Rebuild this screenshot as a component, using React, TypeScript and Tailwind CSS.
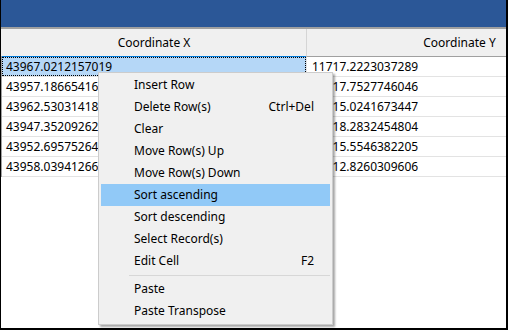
import React from 'react';

const rows = [
  ['43967.0212157019', '11717.2223037289'],
  ['43957.1866541629', '11717.7527746046'],
  ['43962.5303141843', '11715.0241673447'],
  ['43947.3520926291', '11718.2832454804'],
  ['43952.6957526471', '11715.5546382205'],
  ['43958.0394126650', '11712.8260309606'],
];

type MenuItem = { label: string; shortcut?: string; active?: boolean } | 'sep';

const menu: MenuItem[] = [
  { label: 'Insert Row' },
  { label: 'Delete Row(s)', shortcut: 'Ctrl+Del' },
  { label: 'Clear' },
  { label: 'Move Row(s) Up' },
  { label: 'Move Row(s) Down' },
  { label: 'Sort ascending', active: true },
  { label: 'Sort descending' },
  { label: 'Select Record(s)' },
  { label: 'Edit Cell', shortcut: 'F2' },
  'sep',
  { label: 'Paste' },
  { label: 'Paste Transpose' },
];

export default function App() {
  return (
    <div className="relative w-[508px] h-[330px] overflow-hidden bg-white border-l border-r-2 border-b-2 border-black font-['Segoe_UI','Noto_Sans',sans-serif] text-[12px] text-black">
      <div className="h-[27px] bg-[#2b5797]" />
      <div className="h-[2px] bg-[#a0a0a0]" />

      {/* header */}
      <div className="flex h-[28px] bg-[#f0f0f0]">
        <div className="w-[1px] shrink-0 border-b border-[#a0a0a0]" />
        <div className="w-[304px] shrink-0 flex items-center justify-center border-b border-[#0078d7]">Coordinate X</div>
        <div className="w-[306px] shrink-0 flex items-center justify-center border-l border-b border-[#d5d5d5] border-b-[#a0a0a0]">Coordinate Y</div>
      </div>

      {/* rows */}
      <div className="flex flex-col">
        {rows.map((r, i) => (
          <div key={i} className="flex h-[20px]">
            <div className="w-[1px] shrink-0 bg-[#a0a0a0]" />
            <div
              className={`relative w-[304px] shrink-0 flex items-center pl-[4px] border-b border-[#e3e3e3] ${i === 0 ? 'bg-[#b5d7f7]' : ''}`}
            >
              {i === 0 && <div className="absolute inset-0 border border-dotted border-black" />}
              {r[0]}
            </div>
            <div className="w-[306px] shrink-0 flex items-center pl-[5px] border-l border-b border-[#e3e3e3]">{r[1]}</div>
          </div>
        ))}
      </div>

      {/* context menu */}
      <div className="absolute left-[97px] top-[72px] w-[235px] bg-[#f0f0f0] border border-[#cccccc] pt-[1px] pb-[2px] px-[2px] shadow-[2px_2px_2px_rgba(0,0,0,0.35)]">
        {menu.map((m, i) =>
          m === 'sep' ? (
            <div key={i} className="h-[6px] flex items-center pl-[28px]">
              <div className="h-[1px] w-full bg-[#d7d7d7]" />
            </div>
          ) : (
            <div
              key={i}
              className={`h-[22px] flex items-center justify-between pl-[33px] pr-[16px] ${m.active ? 'bg-[#91c9f7]' : ''}`}
            >
              <span>{m.label}</span>
              {m.shortcut && <span>{m.shortcut}</span>}
            </div>
          )
        )}
      </div>
    </div>
  );
}
